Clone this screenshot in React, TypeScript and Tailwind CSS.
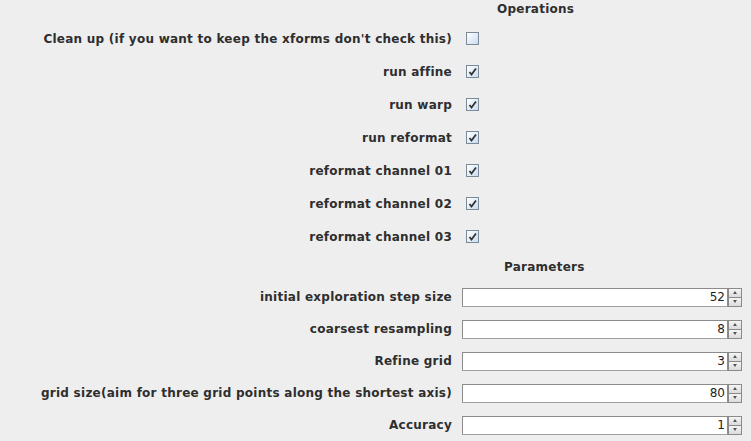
import React from 'react'

const font = { fontFamily: '"DejaVu Sans", "Liberation Sans", sans-serif' }

const checks = [
  { label: "Clean up (if you want to keep the xforms don't check this)", checked: false },
  { label: 'run affine', checked: true },
  { label: 'run warp', checked: true },
  { label: 'run reformat', checked: true },
  { label: 'reformat channel 01', checked: true },
  { label: 'reformat channel 02', checked: true },
  { label: 'reformat channel 03', checked: true },
]

const params = [
  { label: 'initial exploration step size', value: '52' },
  { label: 'coarsest resampling', value: '8' },
  { label: 'Refine grid', value: '3' },
  { label: 'grid size(aim for three grid points along the shortest axis)', value: '80' },
  { label: 'Accuracy', value: '1' },
]

function Checkbox({ checked }: { checked: boolean }) {
  return (
    <div className="w-[13px] h-[13px] border border-[#7a8a99] bg-gradient-to-br from-[#ffffff] to-[#c9dcef] flex items-center justify-center">
      {checked && (
        <svg width="9" height="9" viewBox="0 0 9 9">
          <path d="M1.5 5 L3.5 7.5 L8 1.5" stroke="#333" strokeWidth="1.8" fill="none" />
        </svg>
      )}
    </div>
  )
}

function SpinButton({ up }: { up: boolean }) {
  return (
    <div className="h-[10px] w-[14px] border border-[#8a8a8a] bg-gradient-to-b from-[#f4f4f4] to-[#dcdcdc] flex items-center justify-center -mt-px first:mt-0">
      <svg width="4" height="3" viewBox="0 0 4 3">
        <path d={up ? 'M0 3 L2 0 L4 3 Z' : 'M0 0 L4 0 L2 3 Z'} fill="#555" />
      </svg>
    </div>
  )
}

function Spinner({ value }: { value: string }) {
  return (
    <div className="flex items-start">
      <div className="w-[266px] h-[19px] bg-white border border-[#8c8c8c] border-b-[#a0a0a0] flex items-center justify-end pr-[2px] text-[12px] text-[#222] tracking-normal">
        {value}
      </div>
      <div className="flex flex-col">
        <SpinButton up />
        <SpinButton up={false} />
      </div>
    </div>
  )
}

export default function App() {
  return (
    <div className="w-[751px] h-[441px] bg-[#eeeeee] text-[#2e2e2e] font-bold text-[12px] tracking-[0.25px] overflow-hidden" style={font}>
      <div className="h-[22px] flex items-center pl-[497px] -mt-[2px]">Operations</div>
      <div className="flex flex-col mt-[2px]">
        {checks.map((c) => (
          <div key={c.label} className="h-[33px] flex items-center">
            <div className="w-[452px] text-right whitespace-nowrap">{c.label}</div>
            <div className="ml-[14px]">
              <Checkbox checked={c.checked} />
            </div>
          </div>
        ))}
      </div>
      <div className="h-[28px] flex items-center pl-[504px]">Parameters</div>
      <div className="flex flex-col">
        {params.map((p) => (
          <div key={p.label} className="h-[32px] flex items-center">
            <div className="w-[452px] text-right whitespace-nowrap">{p.label}</div>
            <div className="ml-[10px] font-normal">
              <Spinner value={p.value} />
            </div>
          </div>
        ))}
      </div>
    </div>
  )
}
